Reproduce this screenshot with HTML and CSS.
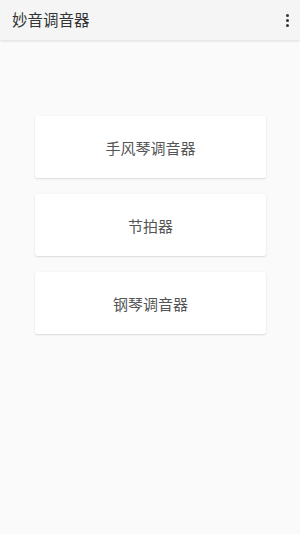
FILE: index.html
```html
<!DOCTYPE html>
<html lang="zh">
<head>
<meta charset="utf-8">
<link rel="stylesheet" href="styles.css">
</head>
<body>
<header class="appbar">
  <span class="title">妙音调音器</span>
  <span class="menu"><i></i><i></i><i></i></span>
</header>
<main class="list">
  <div class="card">手风琴调音器</div>
  <div class="card">节拍器</div>
  <div class="card">钢琴调音器</div>
</main>
</body>
</html>
```
FILE: styles.css
```css
html, body {
  margin: 0;
  padding: 0;
  background: #fafafa;
  font-family: "Noto Sans CJK SC", "Noto Sans", sans-serif;
  width: 300px;
  height: 534px;
  overflow: hidden;
}
.appbar {
  height: 40px;
  background: #f5f5f5;
  box-shadow: 0 1px 3px rgba(0,0,0,0.12);
  display: flex;
  align-items: center;
  justify-content: space-between;
  padding: 0 12px 0 12px;
  position: relative;
}
.title {
  font-size: 15.5px;
  color: #333;
  line-height: 1;
}
.menu {
  display: flex;
  flex-direction: column;
  gap: 2px;
  margin-right: -1px;
}
.menu i {
  width: 3px;
  height: 3px;
  background: #333;
  border-radius: 50%;
}
.list {
  display: flex;
  flex-direction: column;
  gap: 16px;
  padding: 76px 34px 0 35px;
}
.card {
  height: 62px;
  background: #fff;
  border-radius: 2px;
  box-shadow: 0 1px 2px rgba(0,0,0,0.12), 0 0 1px rgba(0,0,0,0.08);
  display: flex;
  align-items: center;
  justify-content: center;
  font-size: 15px;
  color: #555;
}
```
